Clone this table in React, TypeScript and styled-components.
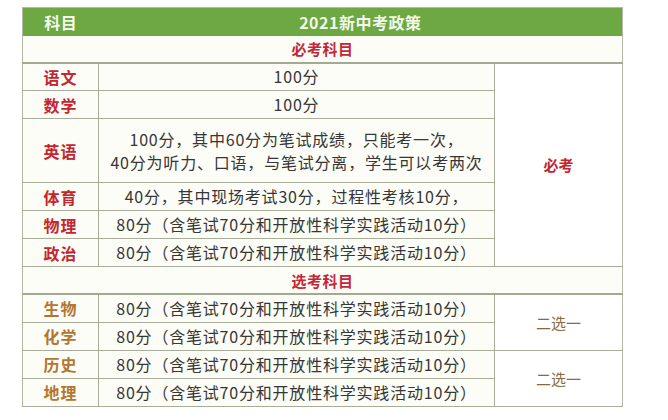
import React, { ReactElement } from 'react';
import styled, { createGlobalStyle } from 'styled-components';

const GlobalStyle = createGlobalStyle`
  body {
    margin: 0;
    background: #ffffff;
    font-family: "Noto Sans CJK SC", "Noto Sans", sans-serif;
  }
`;

const Page = styled.div`
  padding: 7px 0 0 22px;
  width: 668px;
  height: 420px;
  box-sizing: border-box;
`;

const Table = styled.table`
  border-collapse: collapse;
  table-layout: fixed;
  width: 600px;
  background: #fdfdf7;
  border: 1px solid #b4b9a6;
`;

const HeadRow = styled.tr`
  height: 28px;
  background: #6ea843;
`;

const HeadCell = styled.th`
  padding: 0;
  color: #f2f8ea;
  font-size: 16px;
  font-weight: 700;
  text-align: center;
  letter-spacing: 0.5px;
`;

const SectionCell = styled.td`
  padding: 0;
  height: 26px;
  color: #c3283a;
  font-size: 15px;
  font-weight: 700;
  text-align: center;
  letter-spacing: 0.5px;
  border-bottom: 2px solid #a3aa93;
`;

const Row = styled.tr<{ $tall?: boolean }>`
  height: ${(p) => (p.$tall ? '64px' : '28px')};
`;

const Subject = styled.td<{ $elective?: boolean }>`
  padding: 0;
  color: ${(p) => (p.$elective ? '#b37630' : '#c4262f')};
  font-size: 16px;
  font-weight: 700;
  text-align: center;
  letter-spacing: 1px;
  border: 1px solid #a7ad98;
  border-left: none;
`;

const Detail = styled.td`
  padding: 0;
  color: #363636;
  font-size: 16px;
  line-height: 23px;
  letter-spacing: 0.8px;
  text-align: center;
  border: 1px solid #a7ad98;
  white-space: nowrap;
`;

const Note = styled.td<{ $elective?: boolean }>`
  padding: 0;
  color: ${(p) => (p.$elective ? '#8a6a3c' : '#c4262f')};
  font-size: 15px;
  font-weight: ${(p) => (p.$elective ? 400 : 700)};
  text-align: center;
  border: 1px solid #a7ad98;
  border-right: none;
  background: #ffffff;
`;

const practice = '80分（含笔试70分和开放性科学实践活动10分）';

const required: [string, React.ReactNode, boolean?][] = [
  ['语文', '100分'],
  ['数学', '100分'],
  [
    '英语',
    <>
      100分，其中60分为笔试成绩，只能考一次，
      <br />
      40分为听力、口语，与笔试分离，学生可以考两次
    </>,
    true,
  ],
  ['体育', '40分，其中现场考试30分，过程性考核10分，'],
  ['物理', practice],
  ['政治', practice],
];

const electives = ['生物', '化学', '历史', '地理'];

const App = (): ReactElement => (
  <>
    <GlobalStyle />
    <Page>
      <Table>
        <colgroup>
          <col style={{ width: 76 }} />
          <col style={{ width: 396 }} />
          <col style={{ width: 128 }} />
        </colgroup>
        <tbody>
          <HeadRow>
            <HeadCell>科目</HeadCell>
            <HeadCell colSpan={2}>2021新中考政策</HeadCell>
          </HeadRow>
          <tr>
            <SectionCell colSpan={3}>必考科目</SectionCell>
          </tr>
          {required.map(([name, detail, tall], i) => (
            <Row key={name} $tall={tall}>
              <Subject>{name}</Subject>
              <Detail>{detail}</Detail>
              {i === 0 && <Note rowSpan={required.length}>必考</Note>}
            </Row>
          ))}
          <tr>
            <SectionCell colSpan={3}>选考科目</SectionCell>
          </tr>
          {electives.map((name, i) => (
            <Row key={name}>
              <Subject $elective>{name}</Subject>
              <Detail>{practice}</Detail>
              {i % 2 === 0 && (
                <Note $elective rowSpan={2}>
                  二选一
                </Note>
              )}
            </Row>
          ))}
        </tbody>
      </Table>
    </Page>
  </>
);

export default App;
